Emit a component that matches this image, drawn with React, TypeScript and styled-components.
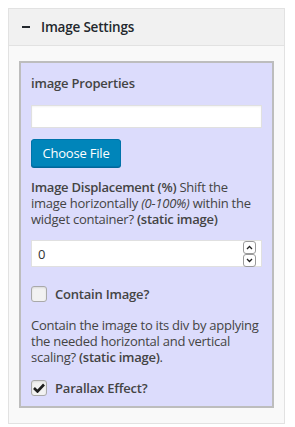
import React from "react";
import styled, { createGlobalStyle } from "styled-components";

const Global = createGlobalStyle`
  html, body { margin: 0; padding: 0; background: #fff; }
  body { padding: 8px; font-family: "Open Sans", "Noto Sans", sans-serif; color: #444; font-size: 13px; }
  * { box-sizing: border-box; }
`;

const Panel = styled.div`
  width: 277px;
  border: 1px solid #e2e2e2;
  background: #f9f9f9;
`;

const Header = styled.div`
  height: 37px;
  display: flex;
  align-items: center;
  gap: 11px;
  padding-left: 13px;
  background: #f1f1f1;
  border-bottom: 1px solid #e2e2e2;
  color: #23282d;
  font-size: 13.5px;
  font-weight: 600;
  letter-spacing: -0.2px;
`;

const Dash = styled.span`
  width: 8px;
  height: 2px;
  background: #23282d;
`;

const Body = styled.div`
  padding: 15px 10px;
`;

const Box = styled.div`
  border: 2px solid #bdbdbd;
  background: #dcdcfc;
  padding: 10px 10px 10px;
`;

const Title = styled.div`
  font-weight: 600;
  line-height: 20px;
  letter-spacing: -0.2px;
`;

const TextInput = styled.div`
  margin-top: 12px;
  height: 23px;
  background: #fff;
  border: 1px solid #e0e0e0;
  box-shadow: inset 0 1px 2px rgba(0, 0, 0, 0.05);
`;

const Button = styled.button`
  margin-top: 11px;
  height: 28px;
  width: 90px;
  padding: 0;
  font-family: inherit;
  font-size: 13px;
  letter-spacing: -0.2px;
  color: #fff;
  background: #0085ba;
  border: 1px solid #0073aa;
  border-radius: 3px;
  box-shadow: 0 1px 0 #006799;
  display: block;
`;

const Para = styled.p<{ $top: number }>`
  margin: ${(p) => p.$top}px 0 0;
  line-height: 16px;
  letter-spacing: -0.25px;
`;

const B = styled.b`
  font-weight: 600;
`;

const NumberField = styled.div`
  margin-top: 13px;
  height: 27px;
  background: #fff;
  border: 1px solid #e0e0e0;
  display: flex;
  align-items: center;
  padding: 0 5px 0 6px;
`;

const NumberValue = styled.span`
  flex: 1;
  color: #333;
`;

const Spinner = styled.div`
  display: flex;
  flex-direction: column;
  width: 13px;
`;

const SpinBtn = styled.div`
  height: 13px;
  border: 1px solid #9a9a9a;
  border-radius: 3px;
  display: flex;
  align-items: center;
  justify-content: center;
  background: #fff;
`;

const CheckRow = styled.label<{ $top: number }>`
  margin-top: ${(p) => p.$top}px;
  display: flex;
  align-items: center;
  gap: 8px;
  font-weight: 600;
  letter-spacing: -0.2px;
  line-height: 16px;
`;

const CheckBox = styled.span`
  width: 16px;
  height: 16px;
  border: 1px solid #a9a9a9;
  border-radius: 3px;
  background: #f2f2f2;
  box-shadow: inset 0 1px 2px rgba(0, 0, 0, 0.1);
  display: flex;
  align-items: center;
  justify-content: center;
`;

const Chevron = ({ up }: { up?: boolean }) => (
  <svg width="7" height="5" viewBox="0 0 7 5">
    <path
      d={up ? "M1 4 L3.5 1.5 L6 4" : "M1 1 L3.5 3.5 L6 1"}
      fill="none"
      stroke="#222"
      strokeWidth="1.3"
    />
  </svg>
);

export default function App() {
  return (
    <>
      <Global />
      <Panel>
        <Header>
          <Dash />
          <span>Image Settings</span>
        </Header>
        <Body>
          <Box>
            <Title>image Properties</Title>
            <TextInput />
            <Button>Choose File</Button>
            <Para $top={12}>
              <B>Image Displacement (%)</B> Shift the image horizontally{" "}
              <i>(0-100%)</i> within the widget container?{" "}
              <B>(static image)</B>
            </Para>
            <NumberField>
              <NumberValue>0</NumberValue>
              <Spinner>
                <SpinBtn>
                  <Chevron up />
                </SpinBtn>
                <SpinBtn>
                  <Chevron />
                </SpinBtn>
              </Spinner>
            </NumberField>
            <CheckRow $top={19}>
              <CheckBox />
              Contain Image?
            </CheckRow>
            <Para $top={15}>
              Contain the image to its div by applying the needed horizontal and
              vertical scaling? <B>(static image)</B>.
            </Para>
            <CheckRow $top={15}>
              <CheckBox>
                <svg width="12" height="10" viewBox="0 0 12 10">
                  <path d="M1 5 L4.5 8.5 L11 1.5" fill="none" stroke="#1e1e1e" strokeWidth="2.6" />
                </svg>
              </CheckBox>
              Parallax Effect?
            </CheckRow>
          </Box>
        </Body>
      </Panel>
    </>
  );
}
